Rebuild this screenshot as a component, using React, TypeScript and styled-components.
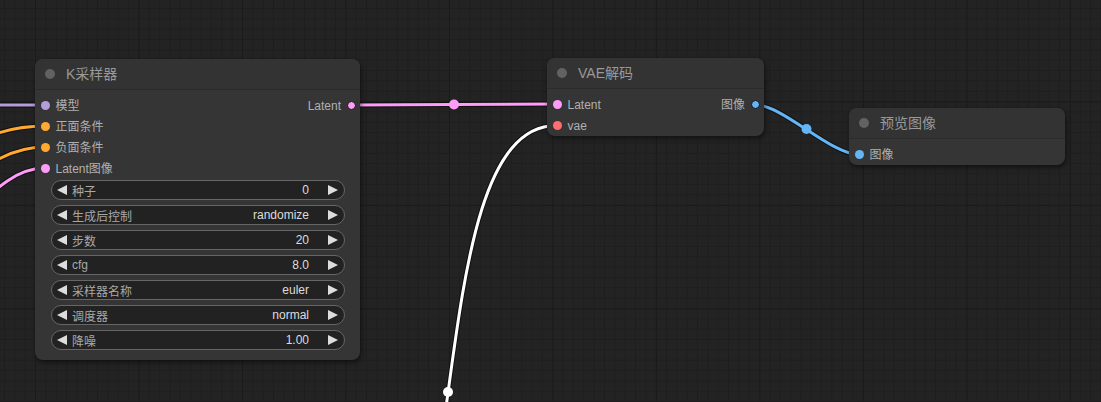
import { createGlobalStyle, styled } from 'styled-components';

const FONT = `'Liberation Sans', Arial, 'Noto Sans CJK SC', sans-serif`;

const GlobalStyle = createGlobalStyle`
  html, body {
    margin: 0;
    padding: 0;
    background: #222;
    overflow: hidden;
  }
`;

type SlotType = 'MODEL' | 'CONDITIONING' | 'LATENT' | 'VAE' | 'IMAGE';

const slotColors: Record<SlotType, string> = {
  MODEL: '#b39ddb',
  CONDITIONING: '#ffa931',
  LATENT: '#ff9cf9',
  VAE: '#ff6e6e',
  IMAGE: '#64b5f6',
};

type Slot = { label: string; type: SlotType };

type Row = { input?: Slot; output?: Slot };

type Widget = { label: string; value: string };

type NodeDef = {
  title: string;
  x: number;
  y: number;
  width: number;
  rows: Row[];
  widgets?: Widget[];
};

const nodes: NodeDef[] = [
  {
    title: 'K采样器',
    x: 35,
    y: 59,
    width: 325,
    rows: [
      { input: { label: '模型', type: 'MODEL' }, output: { label: 'Latent', type: 'LATENT' } },
      { input: { label: '正面条件', type: 'CONDITIONING' } },
      { input: { label: '负面条件', type: 'CONDITIONING' } },
      { input: { label: 'Latent图像', type: 'LATENT' } },
    ],
    widgets: [
      { label: '种子', value: '0' },
      { label: '生成后控制', value: 'randomize' },
      { label: '步数', value: '20' },
      { label: 'cfg', value: '8.0' },
      { label: '采样器名称', value: 'euler' },
      { label: '调度器', value: 'normal' },
      { label: '降噪', value: '1.00' },
    ],
  },
  {
    title: 'VAE解码',
    x: 547,
    y: 58,
    width: 217,
    rows: [
      { input: { label: 'Latent', type: 'LATENT' }, output: { label: '图像', type: 'IMAGE' } },
      { input: { label: 'vae', type: 'VAE' } },
    ],
  },
  {
    title: '预览图像',
    x: 849,
    y: 108,
    width: 216,
    rows: [{ input: { label: '图像', type: 'IMAGE' } }],
  },
];

type Link = { d: string; color: string; mid?: [number, number] };

const links: Link[] = [
  { d: 'M-40,105 L45,105', color: slotColors.MODEL },
  { d: 'M-40,151 C-15,136 10,126 45,126', color: slotColors.CONDITIONING },
  { d: 'M-40,186 C-15,166 10,147 45,147', color: slotColors.CONDITIONING },
  { d: 'M-40,223 C-15,201 10,168 45,168', color: slotColors.LATENT },
  { d: 'M351,105 C402,105 505,104 556.5,104', color: slotColors.LATENT, mid: [454, 104.5] },
  { d: 'M754,104.5 C783,104.5 830,154.5 859,154.5', color: slotColors.IMAGE, mid: [806.5, 129] },
  { d: 'M340,659 C484,659 412,125.5 556.5,125.5', color: '#ffffff', mid: [448, 392] },
];

function App() {
  return (
    <>
      <GlobalStyle />
      <Canvas>
        <Wires width="1101" height="402" viewBox="0 0 1101 402">
          {links.map((link, i) => (
            <g key={i}>
              <path d={link.d} stroke="#000" strokeOpacity={0.55} strokeWidth={5} fill="none" />
              <path d={link.d} stroke={link.color} strokeWidth={3} fill="none" />
              {link.mid && (
                <circle cx={link.mid[0]} cy={link.mid[1]} r={5} fill={link.color} />
              )}
            </g>
          ))}
        </Wires>
        {nodes.map((node) => (
          <Node key={node.title} $x={node.x} $y={node.y} $width={node.width}>
            <Title>
              <TitleDot />
              <TitleText>{node.title}</TitleText>
            </Title>
            <Body>
              {node.rows.map((row, i) => (
                <SlotRow key={i}>
                  <InputSlot>
                    {row.input && (
                      <>
                        <SlotDot $color={slotColors[row.input.type]} />
                        <SlotLabel>{row.input.label}</SlotLabel>
                      </>
                    )}
                  </InputSlot>
                  {row.output && (
                    <OutputSlot>
                      <SlotLabel>{row.output.label}</SlotLabel>
                      <SlotDot $color={slotColors[row.output.type]} $output />
                    </OutputSlot>
                  )}
                </SlotRow>
              ))}
              {node.widgets && (
                <WidgetList>
                  {node.widgets.map((w) => (
                    <WidgetPill key={w.label}>
                      <Arrow viewBox="0 0 10 10">
                        <polygon points="10,0 10,10 0,5" />
                      </Arrow>
                      <WidgetLabel>{w.label}</WidgetLabel>
                      <WidgetValue>{w.value}</WidgetValue>
                      <Arrow viewBox="0 0 10 10">
                        <polygon points="0,0 0,10 10,5" />
                      </Arrow>
                    </WidgetPill>
                  ))}
                </WidgetList>
              )}
            </Body>
          </Node>
        ))}
      </Canvas>
    </>
  );
}

const Canvas = styled.div`
  position: relative;
  width: 1101px;
  height: 402px;
  overflow: hidden;
  background-color: #232323;
  background-image:
    linear-gradient(to right, #1b1b1b 1px, transparent 1px),
    linear-gradient(to bottom, #1b1b1b 1px, transparent 1px),
    linear-gradient(to right, #1e1e1e 1px, transparent 1px),
    linear-gradient(to bottom, #1e1e1e 1px, transparent 1px);
  background-size:
    103.5px 103.5px,
    103.5px 103.5px,
    10.35px 10.35px,
    10.35px 10.35px;
  background-position:
    35px 0,
    0 -2px,
    4px 0,
    0 8px;
  font-family: ${FONT};
`;

const Wires = styled.svg`
  position: absolute;
  left: 0;
  top: 0;
`;

// nodes sit on a free canvas, so their place is the content itself
const Node = styled.div<{ $x: number; $y: number; $width: number }>`
  position: absolute;
  left: ${({ $x }) => $x}px;
  top: ${({ $y }) => $y}px;
  width: ${({ $width }) => $width}px;
  background: #353535;
  border-radius: 8px;
  box-shadow: 1px 2px 5px rgba(0, 0, 0, 0.55);
  display: flex;
  flex-direction: column;
`;

const Title = styled.div`
  height: 31px;
  display: flex;
  align-items: center;
  padding-left: 10px;
  gap: 11px;
  border-bottom: 1px solid #2b2b2b;
  box-sizing: border-box;
  background: #333;
  border-radius: 8px 8px 0 0;
`;

const TitleDot = styled.span`
  width: 10px;
  height: 10px;
  border-radius: 50%;
  background: #626262;
`;

const TitleText = styled.span`
  font-size: 14px;
  color: #999;
  line-height: 1;
`;

const Body = styled.div`
  display: flex;
  flex-direction: column;
  padding: 5px 0 0;
`;

const SlotRow = styled.div`
  height: 21px;
  display: flex;
  align-items: center;
  justify-content: space-between;
`;

const InputSlot = styled.div`
  display: flex;
  align-items: center;
  gap: 6px;
  padding-left: 5.5px;
`;

const OutputSlot = styled.div`
  display: flex;
  align-items: center;
  gap: 5.5px;
  padding-right: 4.5px;
`;

const SlotDot = styled.span<{ $color: string; $output?: boolean }>`
  width: 9px;
  height: 9px;
  border-radius: 50%;
  background: ${({ $color }) => $color};
  box-sizing: border-box;
  border: ${({ $output }) => ($output ? '1px solid #111' : 'none')};
`;

const SlotLabel = styled.span`
  font-size: 12px;
  color: #b0b0b0;
  line-height: 1;
`;

const WidgetList = styled.div`
  display: flex;
  flex-direction: column;
  gap: 5px;
  margin: 1px 15px 10px 16px;
`;

const WidgetPill = styled.div`
  height: 20px;
  box-sizing: border-box;
  border: 1px solid #666;
  border-radius: 10px;
  background: #222;
  display: flex;
  align-items: center;
  padding: 0 6px 0 5px;
  font-size: 12px;
`;

const Arrow = styled.svg`
  width: 10px;
  height: 10px;
  fill: #ddd;
  flex: none;
`;

const WidgetLabel = styled.span`
  color: #a8a8a8;
  margin-left: 5px;
  flex: 1;
`;

const WidgetValue = styled.span`
  color: #ddd;
  margin-right: 19px;
`;

export default App;
